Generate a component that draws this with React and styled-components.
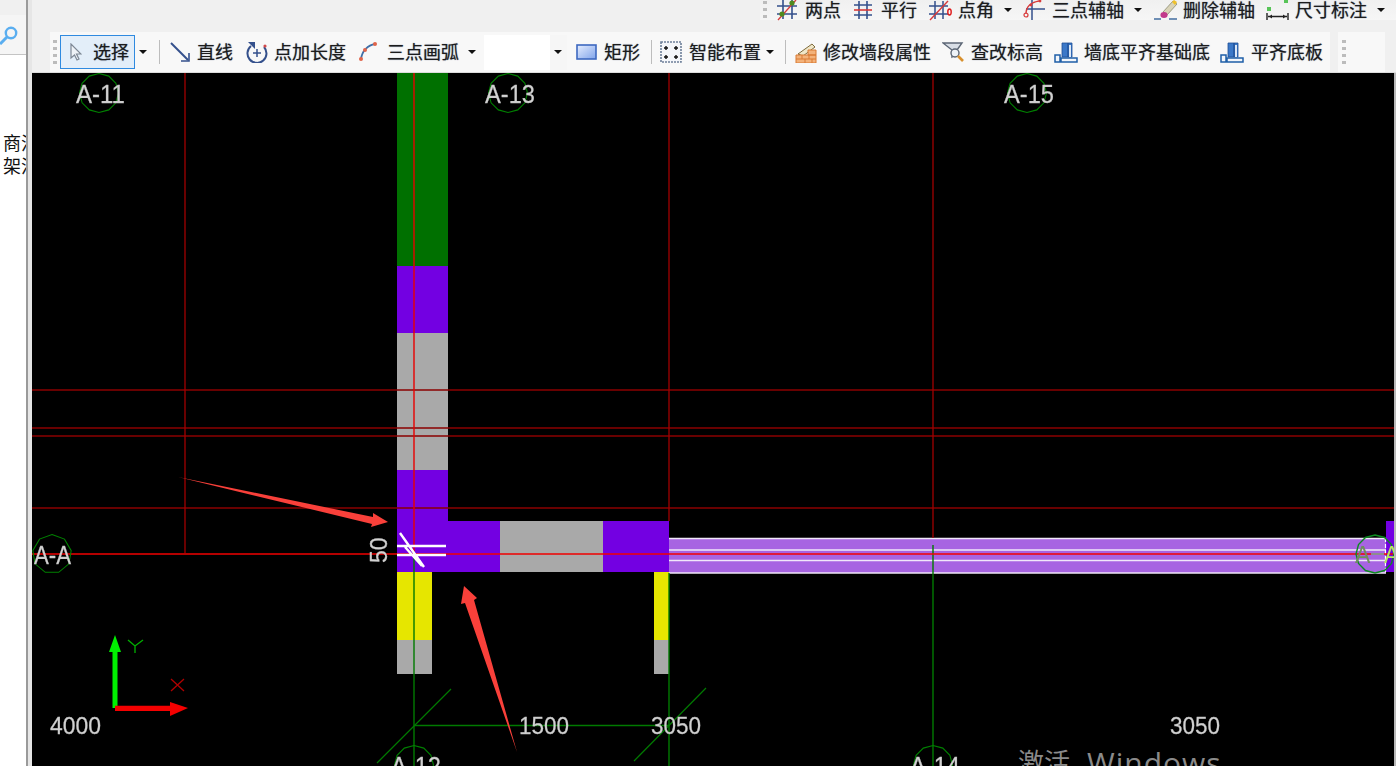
import React from 'react';
import styled, { createGlobalStyle } from 'styled-components';

const Global = createGlobalStyle`
  html, body { margin: 0; padding: 0; background: #f0f0f0; }
  body { font-family: "Noto Sans CJK SC", "Liberation Sans", sans-serif; }
`;

const Page = styled.div`
  display: flex;
  width: 1396px;
  height: 766px;
  overflow: hidden;
  background: #f0f0f0;
`;

const Side = styled.aside`
  display: flex;
  flex: 0 0 32px;
  padding-top: 15px;
  box-sizing: border-box;
  background: linear-gradient(90deg, #9a9a9a 0 2px, #e6e6e6 2px) 26px 0 / 6px 100% no-repeat, #f0f0f0;
`;

const SidePanel = styled.div`
  display: flex;
  flex-direction: column;
  width: 26px;
  overflow: hidden;
`;

const SearchHead = styled.div`
  flex: 0 0 40px;
  box-sizing: border-box;
  padding-top: 8px;
  background: #f5f5f5;
  border-bottom: 1px solid #c4c4c4;
`;

const SideBody = styled.div`
  flex: 1;
  padding: 76px 0 0 3px;
  background: #fff;
  color: #111;
  font-size: 18px;
  line-height: 23px;
  white-space: nowrap;
`;

const Main = styled.main`
  display: flex;
  flex-direction: column;
  flex: 1;
  min-width: 0;
`;

const Bars = styled.header`
  display: flex;
  flex-direction: column;
  flex: 0 0 73px;
  box-sizing: border-box;
  border-bottom: 1px solid #dcdcdc;
`;

const TopStrip = styled.div`
  display: flex;
  align-items: center;
  height: 20px;
  margin-left: 728px;
  padding-left: 3px;
  background: linear-gradient(#f0f0f0, #f6f6f6);
`;

const LowerRow = styled.div`
  display: flex;
  height: 40px;
  margin-top: 12px;
  padding-left: 18px;
`;

const MainBar = styled.div`
  display: flex;
  align-items: center;
  width: 1280px;
  padding-left: 3px;
  box-sizing: border-box;
  background: #f8f8f8;
`;

const TailBar = styled.div`
  display: flex;
  align-items: center;
  width: 47px;
  margin-left: 8px;
  padding-left: 4px;
  box-sizing: border-box;
  background: #f8f8f8;
`;

const Grip = styled.span`
  flex: none;
  width: 4px;
  height: ${p => p.$h}px;
  background: repeating-linear-gradient(#bcbcbc 0 3px, transparent 3px 7px);
`;

const SelectButton = styled.div`
  display: flex;
  align-items: center;
  flex: none;
  width: 75px;
  height: 34px;
  margin-left: 3px;
  padding-left: 9px;
  box-sizing: border-box;
  gap: 11px;
  background: #e3eef9;
  border: 1px solid #2f8ae0;
`;

const Tool = styled.div`
  display: flex;
  align-items: center;
  flex: none;
  gap: ${p => p.$gap}px;
  margin-left: ${p => p.$ml}px;
`;

const IconBox = styled.svg`
  display: block;
  flex: none;
  filter: blur(0.3px);
`;

const Label = styled.span`
  padding-bottom: 2px;
  color: #1c1c1c;
  font-size: 18px;
  line-height: 20px;
  white-space: nowrap;
  text-shadow: 0 0 1px rgba(20, 40, 80, 0.7);
`;

const Caret = styled.span`
  flex: none;
  width: 0;
  height: 0;
  margin-left: ${p => p.$ml}px;
  border-left: 4px solid transparent;
  border-right: 4px solid transparent;
  border-top: 4px solid #111;
`;

const Sep = styled.span`
  flex: none;
  width: 1px;
  height: 24px;
  margin-left: ${p => p.$ml}px;
  background: #bdbdbd;
`;

const Combo = styled.div`
  display: flex;
  align-items: center;
  justify-content: flex-end;
  flex: none;
  width: 83px;
  height: 35px;
  margin-left: 8px;
  padding-right: 5px;
  box-sizing: border-box;
  background: linear-gradient(90deg, #fff 0 66px, #f6f6f6 66px);
`;

const CanvasRow = styled.div`
  display: flex;
  flex: 1;
  min-height: 0;
  background: #b8b8b8;
`;

const Drawing = styled.svg`
  display: block;
  width: 1362px;
  height: 693px;
  background: #000;
`;

const CadText = styled.text`
  font-family: "Liberation Sans", Arial, sans-serif;
  font-size: ${p => p.$size || 24}px;
  fill: #d2d2d2;
  stroke: #bdbdbd;
  stroke-width: 0.3px;
  filter: blur(0.4px);
`;

const Watermark = styled.text`
  font-family: "Open Sans", "Noto Sans CJK SC", sans-serif;
  font-size: 26px;
  fill: #8a8a8a;
`;

const NAVY = '#34508c';
const RED = '#d83a3a';

const Svg = ({ w, h = 22, children }) => (
  <IconBox width={w} height={h} viewBox={`0 0 ${w} ${h}`} fill="none">{children}</IconBox>
);

const Hash = () => (
  <path d="M6 1v19M15 1v19M0 7h21M0 15h21" stroke={NAVY} strokeWidth="1.6" />
);

const icons = {
  twoPoint: w => (
    <Svg w={w}><Hash /><path d="M1 21 19 1" stroke={RED} strokeWidth="1.3" />
      <circle cx="5" cy="15" r="2.6" fill="#4f8a1e" /><circle cx="15" cy="4" r="2.6" fill="#4f8a1e" /></Svg>
  ),
  parallel: w => (
    <Svg w={w}><path d="M6 2v18M14 2v18M1 6h18M1 16h18" stroke={NAVY} strokeWidth="1.6" />
      <path d="M1 11h18" stroke={RED} strokeWidth="1.6" /></Svg>
  ),
  angle: w => (
    <Svg w={w}><path d="M6 2v18M14 2v18M0 7h19M0 15h19" stroke={NAVY} strokeWidth="1.5" />
      <path d="M1 21 19 2" stroke={RED} strokeWidth="1.4" />
      <ellipse cx="20.5" cy="13" rx="1.7" ry="3" stroke="#e01818" strokeWidth="1.4" /></Svg>
  ),
  arcAxis: w => (
    <Svg w={w}><path d="M9 0v21M3 10h19" stroke={NAVY} strokeWidth="1.5" />
      <path d="M3 15C3 7 9 3 16 2" stroke={RED} strokeWidth="1.5" />
      <circle cx="3" cy="16" r="2" stroke={RED} strokeWidth="1.2" /><circle cx="8" cy="6" r="1.4" fill={RED} /><circle cx="17" cy="2" r="1.4" fill={RED} /></Svg>
  ),
  eraser: w => (
    <Svg w={w}><path d="M1 20h7M16 20h8" stroke="#6f8fb5" strokeWidth="1.8" />
      <path d="M10 13 20 2l4 3-10 11z" fill="#d9d3b8" stroke="#8b8b70" strokeWidth=".8" />
      <path d="M19 3l2-2 3 2-2 3z" fill="#efc12a" />
      <ellipse cx="11" cy="16" rx="3.6" ry="3" fill="#c23a8c" /></Svg>
  ),
  dimension: w => (
    <Svg w={w}><rect x="2" y="8" width="4" height="4" fill="#58c458" /><rect x="19" y="0" width="4" height="4" fill="#58c458" />
      <path d="M2 14v7M23 14v7M3 17.5h19" stroke="#222" strokeWidth="1.4" />
      <path d="M4 17.5l3-2v4zM21 17.5l-3-2v4z" fill="#222" /></Svg>
  ),
  line: w => (
    <Svg w={w}><path d="M1 2 18 19" stroke={NAVY} strokeWidth="2" /><path d="M19 12v8h-8" stroke={NAVY} strokeWidth="1.6" /></Svg>
  ),
  pointLength: w => (
    <Svg w={w}><path d="M6 5a9.5 9.5 0 1 0 13 1" stroke={NAVY} strokeWidth="2" />
      <path d="M3 1h7v7z" fill={NAVY} /><path d="M12 8v8M8 12h8" stroke={NAVY} strokeWidth="1.5" />
      <circle cx="20" cy="5" r="1.6" fill="#d24a4a" /></Svg>
  ),
  arc: w => (
    <Svg w={w}><path d="M3 18C4 10 10 4 17 3" stroke="#3f6fa8" strokeWidth="1.8" />
      <circle cx="3" cy="18" r="2" fill="#e0644a" /><circle cx="7" cy="9" r="2" fill="#e0644a" /><circle cx="17" cy="3" r="2" fill="#e0644a" /></Svg>
  ),
  rect: w => (
    <Svg w={w}>
      <defs><linearGradient id="rectFill" x1="0" y1="0" x2="1" y2="1"><stop offset="0" stopColor="#e6eeff" /><stop offset="1" stopColor="#7fa3ea" /></linearGradient></defs>
      <rect x="1" y="4" width="19" height="14" fill="url(#rectFill)" stroke="#3d68c0" strokeWidth="1.6" /></Svg>
  ),
  smart: w => (
    <Svg w={w}><rect x="1" y="1" width="20" height="20" fill="#f4f6fa" stroke="#6d7f99" strokeWidth="1.6" strokeDasharray="2 1" />
      <path d="M6 5v4M4 7h4M16 5v4M14 7h4M6 14v4M4 16h4M16 14v4M14 16h4" stroke="#111" strokeWidth="1.4" /></Svg>
  ),
  wall: w => (
    <Svg w={w}><path d="M3 13 17 3l3 3L8 15z" fill="#efe6c8" stroke="#7d6a3a" strokeWidth="1" />
      <path d="M1 14h20v8H1zM13 9h8v5h-8z" fill="#f3b27a" stroke="#d97b35" strokeWidth="1" />
      <path d="M1 18h20M7 14v4M14 14v4M10 18v4M17 18v4" stroke="#d97b35" strokeWidth="1" /></Svg>
  ),
  level: w => (
    <Svg w={w}><path d="M1 2h19l-5 7v4l-5 3V9z" fill="#d9dee6" stroke="#5c6675" strokeWidth="1.4" />
      <circle cx="13" cy="12" r="4" fill="#eef3f8" stroke="#5c6675" strokeWidth="1.4" />
      <path d="M16 15l5 5" stroke="#d8902e" strokeWidth="2.6" /></Svg>
  ),
  base: w => (
    <Svg w={w}><path d="M8 2h6v14H8zM14 2h4v14h-4z" fill="#3b78c8" stroke="#1f4f96" strokeWidth=".8" />
      <path d="M15 4h2v12h-2z" fill="#dbe8f7" />
      <path d="M1 14h5v7H1zM7 17h16v4H7z" fill="#f2f6fb" stroke="#1f5fa8" strokeWidth="1.5" /></Svg>
  ),
};

const upperTools = [
  { icon: 'twoPoint', w: 20, gap: 8, ml: 10, label: '两点' },
  { icon: 'parallel', w: 20, gap: 8, ml: 12, label: '平行' },
  { icon: 'angle', w: 23, gap: 6, ml: 12, label: '点角', caret: 10 },
  { icon: 'arcAxis', w: 22, gap: 7, ml: 11, label: '三点辅轴', caret: 10 },
  { icon: 'eraser', w: 25, gap: 5, ml: 11, label: '删除辅轴' },
  { icon: 'dimension', w: 25, gap: 5, ml: 10, label: '尺寸标注', caret: 10 },
];

const renderTool = t => (
  <React.Fragment key={t.label}>
    <Tool $gap={t.gap} $ml={t.ml}>
      {icons[t.icon](t.w)}
      <Label>{t.label}</Label>
    </Tool>
    {t.caret ? <Caret $ml={t.caret} /> : null}
  </React.Fragment>
);

const ring = (cx, cy, r, n) =>
  Array.from({ length: n }, (_, i) => {
    const a = (i / n) * Math.PI * 2 - Math.PI / 2;
    return `${(cx + r * Math.cos(a)).toFixed(1)},${(cy + r * Math.sin(a)).toFixed(1)}`;
  }).join(' ');

const axisMarks = [
  { cx: 99, cy: 93, n: 12, x: 76, label: 'A-11', len: 49 },
  { cx: 508, cy: 93, n: 12, x: 485, label: 'A-13', len: 50 },
  { cx: 1027, cy: 93, n: 12, x: 1004, label: 'A-15', len: 50 },
  { cx: 52, cy: 554, n: 9, x: 34, label: 'A-A', len: 37 },
  { cx: 414, cy: 765, n: 12, x: 391, label: 'A-12', len: 50 },
  { cx: 933, cy: 765, n: 12, x: 910, label: 'A-14', len: 50 },
];

const wallBlocks = [
  [397, 73, 51, 193, '#007000'],
  [397, 266, 51, 67, '#7300e2'],
  [397, 333, 51, 137, '#a9a9a9'],
  [397, 470, 51, 102, '#7300e2'],
  [448, 521, 52, 51, '#7300e2'],
  [500, 521, 103, 51, '#a9a9a9'],
  [603, 521, 66, 51, '#7300e2'],
  [397, 572, 35, 68, '#e6e600'],
  [397, 640, 35, 34, '#a9a9a9'],
  [654, 572, 15, 68, '#e6e600'],
  [654, 640, 15, 34, '#a9a9a9'],
  [1386, 521, 8, 51, '#7300e2'],
];

const CadDrawing = () => (
  <Drawing viewBox="32 73 1362 693">
    {wallBlocks.map(([x, y, w, h, fill]) => (
      <rect key={`${x}-${y}`} x={x} y={y} width={w} height={h} fill={fill} />
    ))}

    {/* long wall band on the right */}
    <rect x="669" y="538" width="717" height="35" fill="#a764e2" />
    <path d="M669 538.5h717M669 550h717M669 560.5h717M669 573h717" stroke="#f1e8fa" strokeWidth="1.6" />
    <path d="M1385.5 538v35" stroke="#fff" strokeWidth="1.2" strokeDasharray="4 2" />

    {/* grid lines */}
    <path d="M32 390h1362M32 428h1362M32 436h1362M32 508h1362" stroke="#8a0000" strokeWidth="1.3" />
    <path d="M185 73v480M669 73v448M933 73v465" stroke="#a00000" strokeWidth="1.3" />
    <path d="M414 73v482" stroke="#e80000" strokeWidth="1.4" />
    <path d="M414 555v211M669 573v193M933 545v221M414 725.5h255" stroke="#007a00" strokeWidth="1.4" />
    <path d="M377 763 451 689M634 761 706 688" stroke="#007a00" strokeWidth="1.2" />
    <path d="M32 554h1362" stroke="#f00000" strokeWidth="1.6" />

    {/* opening mark */}
    <path d="M397 546h49M397 555h49M400 533l24 34M405 547l17 19" stroke="#fff" strokeWidth="2.4" />

    {axisMarks.map(m => (
      <g key={m.label + m.x}>
        <polygon points={ring(m.cx, m.cy, 19.5, m.n)} fill="none" stroke="#008000" strokeWidth="1.1" />
        <CadText x={m.x} y={m.cy + 9.5} $size={26} textLength={m.len} lengthAdjust="spacingAndGlyphs">{m.label}</CadText>
      </g>
    ))}
    <polygon points={ring(1375, 554, 19, 12)} fill="none" stroke="#0c8a20" strokeWidth="1.4" />
    <CadText x="1355" y="563" $size={23} style={{ fill: '#6f8f5c', stroke: 'none' }}>A</CadText>
    <path d="M1371 554h13" stroke="#8d8d8d" strokeWidth="2" />
    <CadText x="1384" y="563" $size={23} style={{ fill: '#b4e860', stroke: 'none' }}>A</CadText>

    <CadText x="50" y="734" textLength="51" lengthAdjust="spacingAndGlyphs">4000</CadText>
    <CadText x="519" y="734" textLength="50" lengthAdjust="spacingAndGlyphs">1500</CadText>
    <CadText x="651" y="734" textLength="50" lengthAdjust="spacingAndGlyphs">3050</CadText>
    <CadText x="1170" y="734" textLength="50" lengthAdjust="spacingAndGlyphs">3050</CadText>
    <CadText transform="translate(387 563) rotate(-90)" $size={23}>50</CadText>

    {/* UCS axes */}
    <path d="M112.5 708v-56h-3.5l6-17 6 17h-3.5v56z" fill="#00f000" />
    <path d="M115 705.7h55v-3.7l18 6-18 8v-5h-55z" fill="#f40000" />
    <path d="M128 640l7 6 8-6M135 646v7" stroke="#00b000" strokeWidth="1.3" fill="none" />
    <path d="M171 679l13 12M184 679l-13 12" stroke="#b00000" strokeWidth="1.3" fill="none" />

    {/* annotation arrows */}
    <polygon points="178,477 373,517 373,513 388,522 371,527 372,524" fill="#f9403a" />
    <polygon points="517,752 474,600 477,598 464,586 461,604 465,603" fill="#f9403a" />

    <Watermark x="1018" y="772">激活<tspan x="1087" y="774" fontSize="30" letterSpacing="1">Windows</tspan></Watermark>
  </Drawing>
);

export default function App() {
  return (
    <Page>
      <Global />
      <Side>
        <SidePanel>
          <SearchHead>
            <svg width="20" height="22" viewBox="0 0 20 22" fill="none">
              <circle cx="11" cy="10" r="5.2" stroke="#5aaef0" strokeWidth="2.4" />
              <path d="M7 14 0 21" stroke="#5aaef0" strokeWidth="3" />
            </svg>
          </SearchHead>
          <SideBody>
            <div>商混</div>
            <div>架混</div>
          </SideBody>
        </SidePanel>
      </Side>
      <Main>
        <Bars>
          <TopStrip>
            <Grip $h={18} />
            {upperTools.map(renderTool)}
          </TopStrip>
          <LowerRow>
            <MainBar>
              <Grip $h={24} />
              <SelectButton>
                <svg width="12" height="18" viewBox="0 0 12 18">
                  <path d="M1 1v14l3.5-3 2.5 5 2-1-2.5-5H11z" fill="#eef2f7" stroke="#7d8794" strokeWidth="1.2" />
                </svg>
                <Label>选择</Label>
              </SelectButton>
              <Caret $ml={4} />
              <Sep $ml={12} />
              {renderTool({ icon: 'line', w: 20, gap: 7, ml: 10, label: '直线' })}
              {renderTool({ icon: 'pointLength', w: 23, gap: 6, ml: 12, label: '点加长度' })}
              {renderTool({ icon: 'arc', w: 20, gap: 9, ml: 12, label: '三点画弧', caret: 9 })}
              <Combo><Caret $ml={0} /></Combo>
              {renderTool({ icon: 'rect', w: 21, gap: 7, ml: 9, label: '矩形' })}
              <Sep $ml={11} />
              {renderTool({ icon: 'smart', w: 22, gap: 7, ml: 8, label: '智能布置', caret: 5 })}
              <Sep $ml={11} />
              {renderTool({ icon: 'wall', w: 22, gap: 6, ml: 9, label: '修改墙段属性' })}
              {renderTool({ icon: 'level', w: 22, gap: 7, ml: 11, label: '查改标高' })}
              {renderTool({ icon: 'base', w: 24, gap: 6, ml: 11, label: '墙底平齐基础底' })}
              {renderTool({ icon: 'base', w: 25, gap: 6, ml: 10, label: '平齐底板' })}
            </MainBar>
            <TailBar><Grip $h={24} /></TailBar>
          </LowerRow>
        </Bars>
        <CanvasRow>
          <CadDrawing />
        </CanvasRow>
      </Main>
    </Page>
  );
}
